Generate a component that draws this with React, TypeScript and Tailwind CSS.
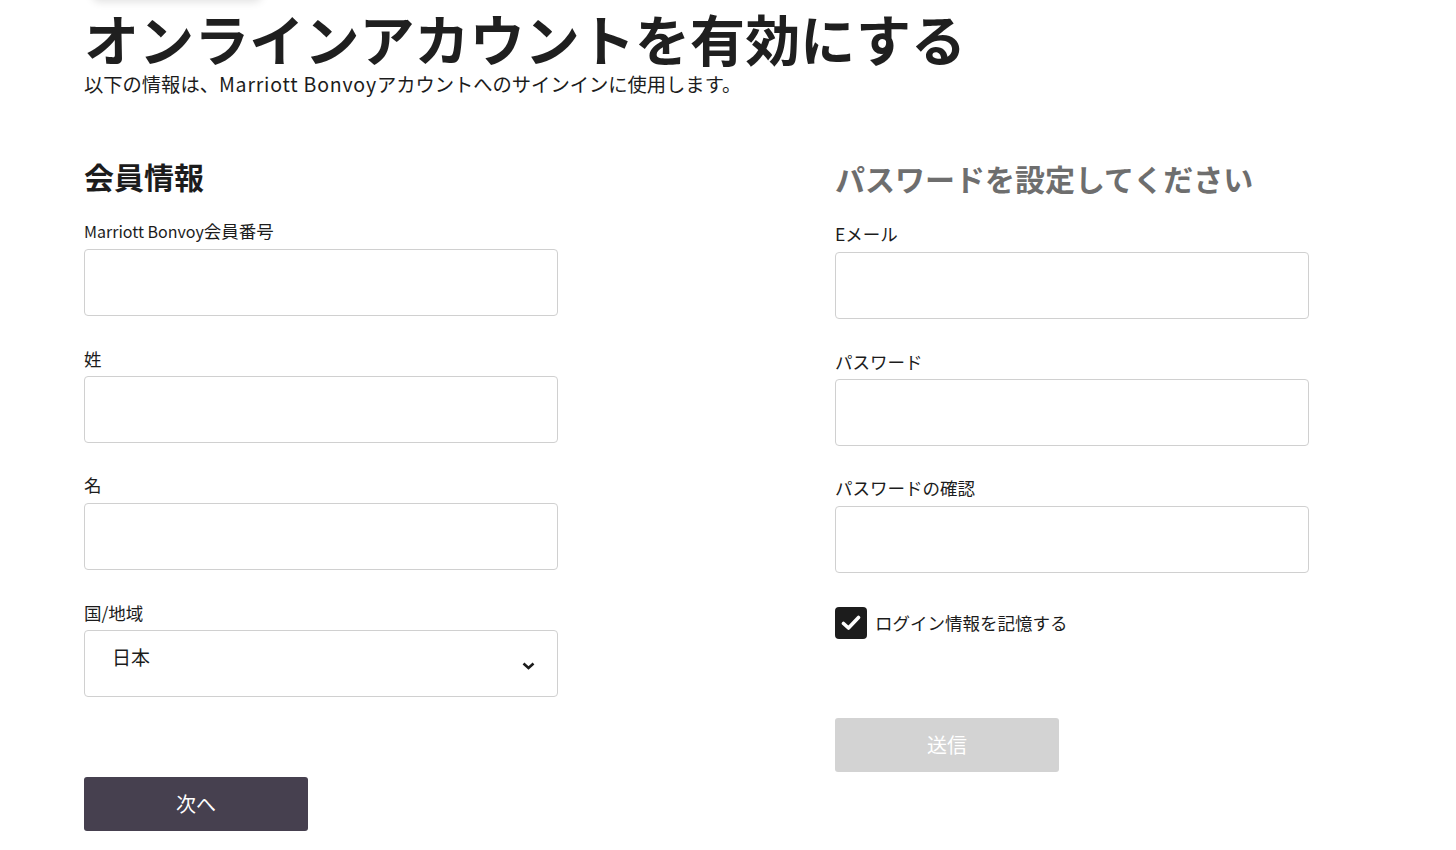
const font = { fontFamily: '"Noto Sans CJK JP", "Noto Sans", sans-serif' };

function Field({ label, className = "" }: { label: React.ReactNode; className?: string }) {
  return (
    <div className={className}>
      <label className="block text-[17.5px] leading-none text-[#1c1c1c] mb-[9px]">{label}</label>
      <input className="block w-[474px] h-[67px] border border-[#d0d0d0] rounded-[4px] bg-white px-6 outline-none" />
    </div>
  );
}

export default function App() {
  return (
    <div className="relative min-h-[850px] bg-white text-[#1c1c1c] overflow-hidden" style={font}>
      {/* faint shadow of header card scrolled out of view */}
      <div className="absolute left-[92px] top-[-40px] w-[170px] h-[40px] rounded-lg bg-white shadow-[0_2px_8px_rgba(0,0,0,0.12)]" />

      <div className="pl-[84px] pt-[10px]">
        <h1 className="text-[55px] leading-none font-bold text-[#1f1f1f] tracking-[0.1px]">
          オンラインアカウントを有効にする
        </h1>
        <p className="mt-[9px] text-[19.3px] leading-none">
          以下の情報は、<span className="tracking-[0.8px] text-[19.5px]">Marriott Bonvoy</span>アカウントへのサインインに使用します。
        </p>

        <div className="flex mt-[67px]">
          {/* left column */}
          <div className="w-[751px]">
            <h2 className="text-[30px] leading-none font-bold text-[#1c1c1c]">会員情報</h2>
            <Field label={<><span className="text-[16px]">Marriott Bonvoy</span>会員番号</>} className="mt-[31px]" />
            <Field label="姓" className="mt-[34px]" />
            <Field label="名" className="mt-[33px]" />
            <div className="mt-[34px]">
              <label className="block text-[17.5px] leading-none mb-[9px]">国/地域</label>
              <div className="relative w-[474px] h-[67px] border border-[#d0d0d0] rounded-[4px] flex items-start pl-[27px] pt-[16px]">
                <span className="text-[19px] leading-none">日本</span>
                <svg className="absolute right-[22px] top-[31px]" width="13" height="8" viewBox="0 0 13 8">
                  <path d="M1.5 1.5 L6.5 6 L11.5 1.5" fill="none" stroke="#1c1c1c" strokeWidth="2.6" />
                </svg>
              </div>
            </div>
            <button className="mt-[80px] w-[224px] h-[54px] rounded-[3px] bg-[#46404f] text-white text-[20px]">
              次へ
            </button>
          </div>

          {/* right column */}
          <div className="w-[474px] pt-[2px]">
            <h2 className="text-[30px] leading-none font-bold text-[#6e6e6e]">パスワードを設定してください</h2>
            <Field label="Eメール" className="mt-[32px]" />
            <Field label="パスワード" className="mt-[34px]" />
            <Field label="パスワードの確認" className="mt-[33px]" />
            <div className="mt-[34px] flex items-center gap-[8px]">
              <div className="w-[32px] h-[32px] rounded-[4px] bg-[#1c1c1c] flex items-center justify-center">
                <svg width="20" height="16" viewBox="0 0 20 16">
                  <path d="M2.5 8.5 L7.5 13 L17.5 2.5" fill="none" stroke="#fff" strokeWidth="3.6" strokeLinecap="round" strokeLinejoin="round" />
                </svg>
              </div>
              <span className="text-[17.5px] leading-none">ログイン情報を記憶する</span>
            </div>
            <button className="mt-[79px] w-[224px] h-[54px] rounded-[3px] bg-[#d3d3d3] text-white text-[20px]">
              送信
            </button>
          </div>
        </div>
      </div>
    </div>
  );
}
